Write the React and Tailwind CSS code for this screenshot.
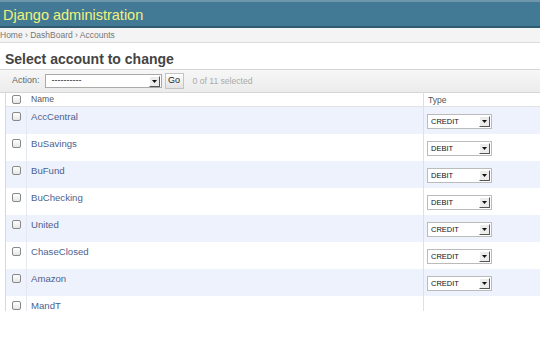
import React from "react";

const rows = [
  ["AccCentral", "CREDIT"],
  ["BuSavings", "DEBIT"],
  ["BuFund", "DEBIT"],
  ["BuChecking", "DEBIT"],
  ["United", "CREDIT"],
  ["ChaseClosed", "CREDIT"],
  ["Amazon", "CREDIT"],
  ["MandT", null],
];

function Arrow() {
  return (
    <span className="flex h-[11px] w-[11px] items-center justify-center border-r border-b border-[#555] border-t border-l border-t-white border-l-white bg-[#ececec]">
      <svg width="5" height="3" viewBox="0 0 5 3">
        <path d="M0 0h5L2.5 3z" fill="#111" />
      </svg>
    </span>
  );
}

function Check() {
  return (
    <span className="block h-[9px] w-[9px] rounded-[2px] border border-[#888] bg-gradient-to-b from-white to-[#e6e6e6]" />
  );
}

export default function App() {
  return (
    <div
      className="h-[338px] w-[540px] overflow-hidden bg-white"
      style={{ fontFamily: '"Liberation Sans", Arial, sans-serif' }}
    >
      <div className="h-[311px] overflow-hidden">
        <div className="flex h-[28px] items-center border-t-2 border-t-[#6f97ab] bg-[#427a95] pl-[3px] shadow-[inset_0_-2px_0_#2f5b70]">
          <span className="text-[14.5px] leading-none text-[#eef27c]">Django administration</span>
        </div>
        <div className="flex h-[15px] items-center border-b border-[#dcdcdc] bg-[#f4f4f4] pt-[1px] text-[8.5px] text-[#777]">
          Home › DashBoard › Accounts
        </div>
        <div className="flex h-[26px] items-center pl-[5px] pt-[6px] text-[14px] font-bold text-[#444]">
          Select account to change
        </div>
        <div className="flex h-[24px] items-center border-t border-b border-[#d6d6d6] bg-gradient-to-b from-[#f7f7f7] to-[#ececec] pl-[12px] text-[9px]">
          <span className="text-[#666]">Action:</span>
          <span className="ml-[5px] flex h-[14px] w-[117px] items-center justify-between border border-[#aaa] bg-white pl-[6px] pr-[1px] text-[9px] text-[#222]">
            ----------
            <Arrow />
          </span>
          <span className="ml-[3px] flex h-[16px] w-[19px] items-center justify-center border border-[#c4c4c4] bg-gradient-to-b from-white to-[#e2e2e2] text-[9px] text-[#222]">
            Go
          </span>
          <span className="ml-[9px] text-[8.6px] text-[#aaa]">0 of 11 selected</span>
        </div>
        <div className="ml-[5px] border-l border-[#d8d8d8]">
          <div className="flex h-[14px] items-center border-b border-[#e2e2e2] bg-white text-[8.6px] text-[#555]">
            <div className="flex w-[20px] justify-center">
              <Check />
            </div>
            <div className="w-[397px] pl-[5px]">Name</div>
            <div className="h-full border-l border-[#ddd] pl-[4px] leading-[14px]">Type</div>
          </div>
          {rows.map(([name, type], i) => (
            <div
              key={name}
              className={`flex h-[27px] ${i % 2 === 0 ? "bg-[#edf2fc]" : "bg-white"}`}
            >
              <div className="flex w-[20px] justify-center pt-[5px]">
                <Check />
              </div>
              <div className="w-[397px] border-l border-[#e4e8f0] pl-[4px] pt-[3px] text-[9.6px] text-[#4d5f8f]">
                {name}
              </div>
              <div className="flex-1 border-l border-[#e0e0e0] pl-[3px] pt-[7px]">
                {type && (
                  <span className="flex h-[15px] w-[65px] items-center justify-between border border-[#bbb] bg-white pl-[3px] pr-[1px] text-[7.5px] text-[#111]">
                    {type}
                    <Arrow />
                  </span>
                )}
              </div>
            </div>
          ))}
        </div>
      </div>
    </div>
  );
}
